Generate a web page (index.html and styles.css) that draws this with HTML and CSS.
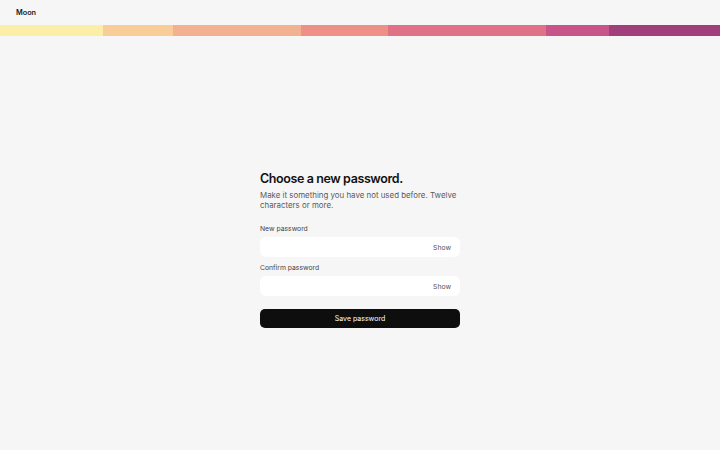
FILE: index.html
```html
<!DOCTYPE html>
<html lang="en">
<head>
<meta charset="utf-8">
<title>Moon</title>
<link rel="stylesheet" href="styles.css">
</head>
<body>
<header class="top">
  <span class="brand">Moon</span>
</header>
<div class="stripe">
  <span class="seg s1"></span>
  <span class="seg s2"></span>
  <span class="seg s3"></span>
  <span class="seg s4"></span>
  <span class="seg s5"></span>
  <span class="seg s6"></span>
  <span class="seg s7"></span>
</div>
<main class="main">
  <form class="card">
    <h1 class="title">Choose a new password.</h1>
    <p class="lead">Make it something you have not used before. Twelve characters or more.</p>
    <label class="label first">New password</label>
    <div class="field"><span class="show">Show</span></div>
    <label class="label">Confirm password</label>
    <div class="field"><span class="show">Show</span></div>
    <button type="button" class="btn">Save password</button>
  </form>
</main>
</body>
</html>
```
FILE: styles.css
```css
* { box-sizing: border-box; }
html, body { margin: 0; padding: 0; }
body {
  background: #f6f6f6;
  font-family: Inter, "Noto Sans", sans-serif;
  color: #111;
  width: 720px;
  height: 450px;
  overflow: hidden;
}
.top {
  height: 25px;
  display: flex;
  align-items: center;
  padding: 0 16px;
}
.brand {
  font-size: 7.3px;
  font-weight: 600;
  color: #1a1a1a;
}
.stripe {
  display: flex;
  height: 11px;
}
.seg { display: block; height: 100%; }
.s1 { flex: 0 0 103px; background: #fbeea6; }
.s2 { flex: 0 0 70px; background: #f9cd98; }
.s3 { flex: 0 0 128px; background: #f2b292; }
.s4 { flex: 0 0 87px; background: #ee8f88; }
.s5 { flex: 0 0 158px; background: #e07186; }
.s6 { flex: 0 0 63px; background: #c8548a; }
.s7 { flex: 1 1 auto; background: #a03f7c; }
.main {
  display: flex;
  justify-content: center;
  padding-top: 135px;
}
.card {
  width: 200px;
  display: flex;
  flex-direction: column;
}
.title {
  margin: 0;
  font-size: 12.5px;
  font-weight: 600;
  letter-spacing: -0.4px;
  line-height: 16px;
  color: #111;
}
.lead {
  margin: 3px 0 0;
  font-size: 7.9px;
  line-height: 10px;
  color: #5a5a5a;
}
.label {
  margin-top: 7px;
  font-size: 6.8px;
  line-height: 8px;
  color: #444;
}
.label.first { margin-top: 15px; }
.field {
  margin-top: 4px;
  height: 20px;
  background: #fff;
  border-radius: 6px;
  display: flex;
  align-items: center;
  justify-content: flex-end;
  padding-right: 9px;
}
.show {
  font-size: 6.8px;
  color: #555;
}
.btn {
  margin-top: 13px;
  height: 19px;
  border: 0;
  border-radius: 5px;
  background: #0e0e0e;
  color: #fff;
  font-family: Inter, "Noto Sans", sans-serif;
  font-size: 7px;
  padding: 0;
}
```
